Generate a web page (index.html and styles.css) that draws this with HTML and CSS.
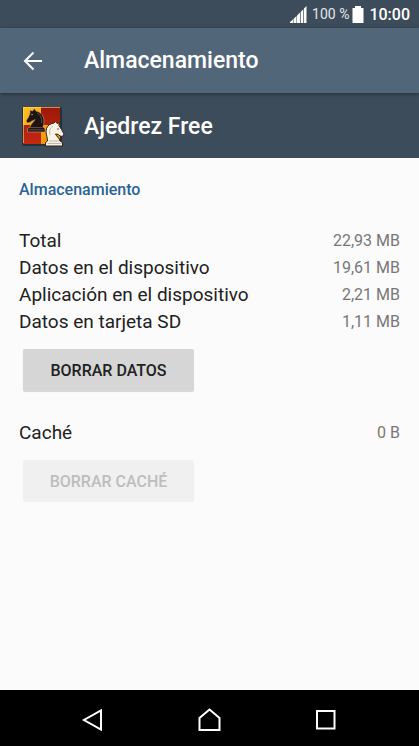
FILE: index.html
```html
<!DOCTYPE html>
<html lang="es">
<head>
  <meta charset="UTF-8" />
  <meta name="viewport" content="width=device-width, initial-scale=1.0"/>
  <title>Almacenamiento</title>
  <link rel="stylesheet" href="styles.css">
</head>
<body>
  <div class="status-bar">
    <svg class="signal" width="18" height="17" viewBox="0 0 18 17" fill="#fff">
      <path d="M1 17V16L4 13.500V17zM4.500 17V13L7.500 10V17zM8 17V9.500L11 6.500V17zM11.700 17V6L14.300 3.300V17zM15 17V2.500L17.500 0V17z"/>
    </svg>
    <span class="percent">100 %</span>
    <svg class="battery" width="12" height="17" viewBox="0 0 12 17" fill="#fff">
      <path d="M3 0h6v2h2.500v15H.500V2H3z"/>
    </svg>
    <span class="clock">10:00</span>
  </div>

  <header class="app-bar">
    <button class="back" aria-label="Atrás">
      <svg width="20" height="20" viewBox="0 0 20 20" fill="none" stroke="#fff" stroke-width="2">
        <path d="M20 10H3M11.500 1.500L3 10l8.500 8.500"/>
      </svg>
    </button>
    <h1>Almacenamiento</h1>
  </header>

  <section class="app-info">
    <svg class="app-icon" width="44" height="44" viewBox="0 0 44 44">
      <defs>
        <linearGradient id="gold" x1="0" y1="0" x2="1" y2="1">
          <stop offset="0" stop-color="#ffc21a"/>
          <stop offset="1" stop-color="#ee8a00"/>
        </linearGradient>
        <linearGradient id="red" x1="0" y1="0" x2="0" y2="1">
          <stop offset="0" stop-color="#9c1808"/>
          <stop offset="1" stop-color="#c42812"/>
        </linearGradient>
      </defs>
      <rect x="0" y="2" width="40" height="39" rx="2" fill="#26303a"/>
      <rect x="1" y="2" width="37" height="37" rx="1" fill="url(#red)"/>
      <path d="M1 2h18v18H1zM19 20h19v19H19z" fill="url(#gold)"/>
      <path d="M1.500 38V2.500H38" fill="none" stroke="#ffd56a" stroke-opacity=".6"/>
      <!-- black knight -->
      <path transform="translate(-1 0)" d="M6.500 27v-3.500l2.500-1.500c.500-3 3.500-4.500 5-7.500-2 1.500-4 1.500-5 3l-2.500.500-1.500-2 2.500-4 1.500-4L9 5l2.500 1L13.500 3.500l1.500 2.500c5 1 8 5 8 10.500 0 2-.500 4-1 5.500l2 1.500V27z" fill="#1d1512" stroke="#e0a070" stroke-width=".6"/>
      <path d="M7.500 22.500h13M6.500 24.800h15M15 8c3.500 1.500 5 5 4.500 10" fill="none" stroke="#846257" stroke-width=".7"/>
      <circle cx="10" cy="9.500" r=".7" fill="#d9b9a5"/>
      <!-- white knight -->
      <path d="M23.500 41v-3.500l2-1.500c0-5-2.500-8-1-12.500 1-3 4-5 7.500-5.500l1.500-1.500 1.500 2 2-1v3l2.500 4 2.500 4.500-1.500 2.500-2.500-.500-1.500-1.500-3-.500c1 2.500 4 4 4.500 7l2.500 1.500V41z" fill="#f8f2e4" stroke="#33201a"/>
      <path d="M27 36h10M25.500 38.500h14M31 21c-3 2-4 5-3 9" fill="none" stroke="#b3a698" stroke-width=".8"/>
      <circle cx="36" cy="24" r=".7" fill="#33201a"/>
    </svg>
    <h2>Ajedrez Free</h2>
  </section>

  <main>
    <h3>Almacenamiento</h3>
    <dl>
      <div class="row"><dt>Total</dt><dd>22,93 MB</dd></div>
      <div class="row"><dt>Datos en el dispositivo</dt><dd>19,61 MB</dd></div>
      <div class="row"><dt>Aplicación en el dispositivo</dt><dd>2,21 MB</dd></div>
      <div class="row"><dt>Datos en tarjeta SD</dt><dd>1,11 MB</dd></div>
    </dl>
    <button class="action">BORRAR DATOS</button>
    <dl>
      <div class="row"><dt>Caché</dt><dd>0 B</dd></div>
    </dl>
    <button class="action" disabled>BORRAR CACHÉ</button>
  </main>

  <nav class="nav-bar">
    <button aria-label="Volver">
      <svg width="24" height="24" viewBox="0 0 24 24" fill="none" stroke="#fff" stroke-width="2">
        <path d="M21 2.500v19L4 12z"/>
      </svg>
    </button>
    <button aria-label="Inicio">
      <svg width="24" height="24" viewBox="0 0 24 24" fill="none" stroke="#fff" stroke-width="2">
        <path d="M11.500 1.500L21.500 10V22H1.500V10z"/>
      </svg>
    </button>
    <button aria-label="Recientes">
      <svg width="24" height="24" viewBox="0 0 24 24" fill="none" stroke="#fff" stroke-width="2">
        <rect x="2" y="3" width="17.500" height="17.500"/>
      </svg>
    </button>
  </nav>
</body>
</html>
```

FILE: styles.css
```css
* {
  box-sizing: border-box;
}

body {
  margin: 0;
  font-family: Roboto, sans-serif;
  background: #fbfbfb;
  color: #212121;
  display: flex;
  flex-direction: column;
  min-height: 100vh;
}

h1, h2, h3, dl, dd {
  margin: 0;
}

button {
  border: none;
  padding: 0;
  background: none;
  font-family: inherit;
}

svg {
  display: block;
}

.status-bar {
  height: 28px;
  padding: 0 9px;
  background: #3d4c5b;
  color: #fff;
  display: flex;
  align-items: center;
  justify-content: flex-end;
}

.percent {
  margin: 0 3px 0 5px;
  font-size: 14px;
  color: #e4e8eb;
}

.clock {
  margin-left: 5px;
  font-size: 16px;
  font-weight: 500;
}

.app-bar,
.app-info {
  height: 65px;
  padding: 0 22px;
  color: #fff;
  display: flex;
  align-items: center;
}

.app-bar {
  background: #526679;
  box-shadow: 0 1px 4px rgba(0, 0, 0, 0.4);
  z-index: 1;
}

.app-info {
  padding-top: 2px;
  background: #3d4c5b;
}

.back,
.app-icon {
  width: 44px;
  margin-right: 18px;
}

h1, h2 {
  font-size: 23px;
  font-weight: 500;
}

main {
  flex: 1;
  padding: 18px 19px;
}

h3 {
  margin-bottom: 24px;
  font-size: 16px;
  line-height: 27px;
  font-weight: 500;
  color: #2a6496;
}

.row {
  display: flex;
  justify-content: space-between;
  line-height: 27px;
}

dt {
  font-size: 19px;
}

dd {
  font-size: 16px;
  color: #777;
}

.action {
  display: block;
  min-width: 171px;
  height: 42px;
  margin: 14px 4px 28px;
  border-radius: 2px;
  background: #d6d6d6;
  box-shadow: 0 1px 1px rgba(0, 0, 0, 0.15);
  color: #212121;
  font-size: 16px;
  font-weight: 500;
}

.action:disabled {
  background: #f0f0f0;
  box-shadow: none;
  color: #bdbdbd;
}

.nav-bar {
  height: 56px;
  background: #000;
  display: flex;
  align-items: center;
  justify-content: center;
}

.nav-bar button {
  flex: 0 0 28%;
  display: flex;
  justify-content: center;
  padding-top: 4px;
}
```
